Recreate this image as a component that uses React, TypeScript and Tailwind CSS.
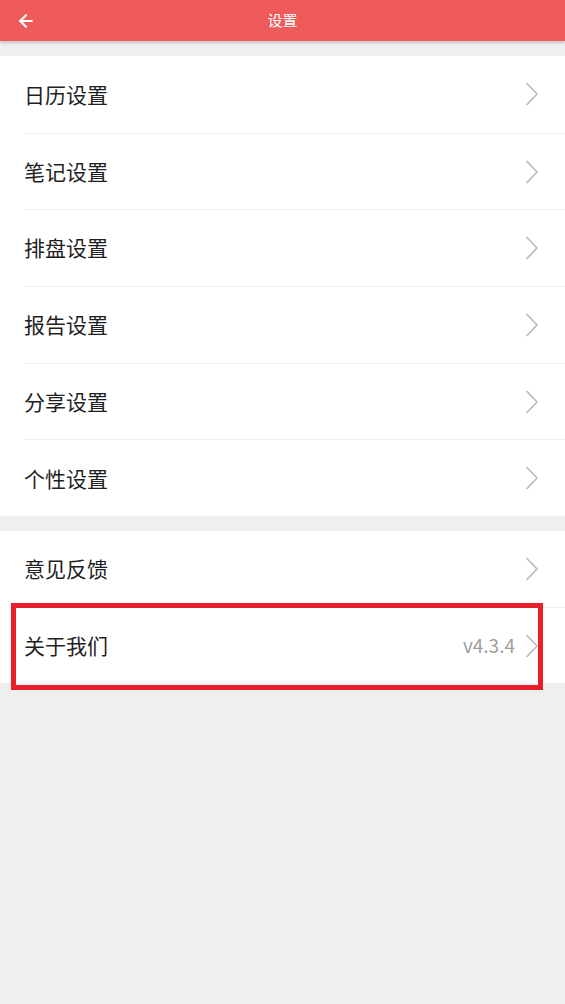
import { ArrowLeft } from "lucide-react";

const groupOne = ["日历设置", "笔记设置", "排盘设置", "报告设置", "分享设置", "个性设置"];
const groupTwo = ["意见反馈", "关于我们"];

const font = {
  fontFamily: '"Noto Sans CJK SC", Roboto, "Liberation Sans", sans-serif',
};

function Chevron() {
  return (
    <svg width="14" height="24" viewBox="0 0 14 24" fill="none" className="shrink-0">
      <path d="M2 1.5 L12 12 L2 22.5" stroke="#bdbdbd" strokeWidth="1.8" strokeLinecap="round" strokeLinejoin="round" />
    </svg>
  );
}

function Row({ label, extra, first, tall }: { label: string; extra?: string; first?: boolean; tall?: boolean }) {
  return (
    <div className="pl-6">
      <div
        className={`flex items-center ${tall ? "h-[76.7px]" : "h-[76px]"} pr-[26px] ${first ? "" : "border-t border-[#eeeeee]"}`}
      >
        <span className="flex-1 text-[21px] text-[#1f1f1f]">{label}</span>
        {extra && <span className="text-[19px] text-[#9e9e9e] mr-[10px]">{extra}</span>}
        <Chevron />
      </div>
    </div>
  );
}

export default function App() {
  return (
    <div className="relative min-h-[1004px] bg-[#efefef]" style={font}>
      {/* Header */}
      <header className="relative h-[41px] bg-[#ef5a5b] flex items-center shadow-[0_2px_3px_rgba(0,0,0,0.18)] z-10">
        <ArrowLeft className="ml-[16px] w-[20px] h-[20px] text-white" strokeWidth={2.6} />
        <span className="absolute left-0 right-0 text-center text-[15px] text-white pointer-events-none">设置</span>
      </header>

      <div className="pt-[15px]">
        <section className="bg-white">
          {groupOne.map((label, i) => (
            <Row key={label} label={label} first={i === 0} tall />
          ))}
        </section>

        <section className="bg-white mt-[15px]">
          {groupTwo.map((label, i) => (
            <Row key={label} label={label} first={i === 0} extra={i === 1 ? "v4.3.4" : undefined} />
          ))}
        </section>
      </div>

      {/* Highlight annotation */}
      <div className="absolute left-[11px] top-[603px] w-[532px] h-[87px] border-[5px] border-[#e81e2b] pointer-events-none" />
    </div>
  );
}
